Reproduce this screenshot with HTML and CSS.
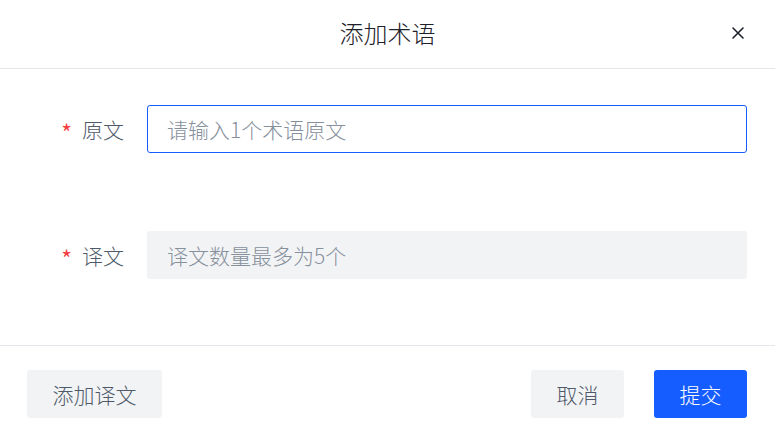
FILE: index.html
```html
<!DOCTYPE html>
<html lang="zh-CN">
<head>
<meta charset="utf-8">
<link rel="stylesheet" href="styles.css">
</head>
<body>
<div class="modal">
  <div class="header">
    <div class="title">添加术语</div>
    <button class="close" aria-label="关闭">
      <svg width="12" height="12" viewBox="0 0 12 12"><path d="M1 1L11 11M11 1L1 11" stroke="#1d2129" stroke-width="1.6" stroke-linecap="round"/></svg>
    </button>
  </div>
  <div class="body">
    <div class="row">
      <label class="label"><span class="req">*</span>原文</label>
      <div class="input focused"><span class="ph">请输入1个术语原文</span></div>
    </div>
    <div class="row">
      <label class="label"><span class="req">*</span>译文</label>
      <div class="input disabled"><span class="ph">译文数量最多为5个</span></div>
    </div>
  </div>
  <div class="footer">
    <button class="btn secondary wide">添加译文</button>
    <div class="actions">
      <button class="btn secondary">取消</button>
      <button class="btn primary">提交</button>
    </div>
  </div>
</div>
</body>
</html>
```
FILE: styles.css
```css
* { box-sizing: border-box; }
html, body { margin: 0; padding: 0; background: #fff; }
body {
  font-family: "Noto Sans CJK SC", "Noto Sans", sans-serif;
  font-weight: 300;
  color: #1d2129;
  width: 775px;
  height: 439px;
  overflow: hidden;
}
.modal { width: 775px; }
.header {
  height: 69px;
  border-bottom: 1px solid #e5e6eb;
  display: flex;
  align-items: center;
  justify-content: center;
  position: relative;
}
.title {
  font-size: 24px;
  line-height: 32px;
  color: #1d2129;
  margin-top: -2px;
}
.close {
  position: absolute;
  left: 732px;
  top: 27px;
  width: 12px;
  height: 12px;
  padding: 0;
  border: 0;
  background: none;
  display: flex;
}
.body {
  padding: 36px 28px 66px 0;
  display: flex;
  flex-direction: column;
  gap: 78px;
}
.row {
  display: flex;
  align-items: center;
  height: 48px;
}
.label {
  width: 147px;
  padding-right: 23px;
  text-align: right;
  font-size: 21px;
  color: #4e5969;
  display: flex;
  justify-content: flex-end;
  align-items: center;
}
.req {
  color: #f53f3f;
  font-size: 23px;
  font-weight: 400;
  margin-right: 10px;
  position: relative;
  top: 3px;
}
.input {
  flex: 1;
  height: 48px;
  border-radius: 3px;
  display: flex;
  align-items: center;
  padding-left: 19px;
  font-size: 21px;
}
.input.focused { border: 1px solid #165dff; background: #fff; }
.input.disabled { background: #f2f3f5; padding-left: 20px; }
.ph { color: #86909c; }
.footer {
  border-top: 1px solid #e5e6eb;
  padding: 24px 28px 0 27px;
  display: flex;
  justify-content: space-between;
}
.actions { display: flex; gap: 30px; }
.btn {
  font-family: inherit;
  font-weight: 300;
  height: 48px;
  width: 93px;
  border: 0;
  border-radius: 3px;
  font-size: 21px;
  padding: 0;
}
.btn.wide { width: 135px; }
.btn.secondary { background: #f2f3f5; color: #4e5969; }
.btn.primary { background: #165dff; color: #fff; }
```
